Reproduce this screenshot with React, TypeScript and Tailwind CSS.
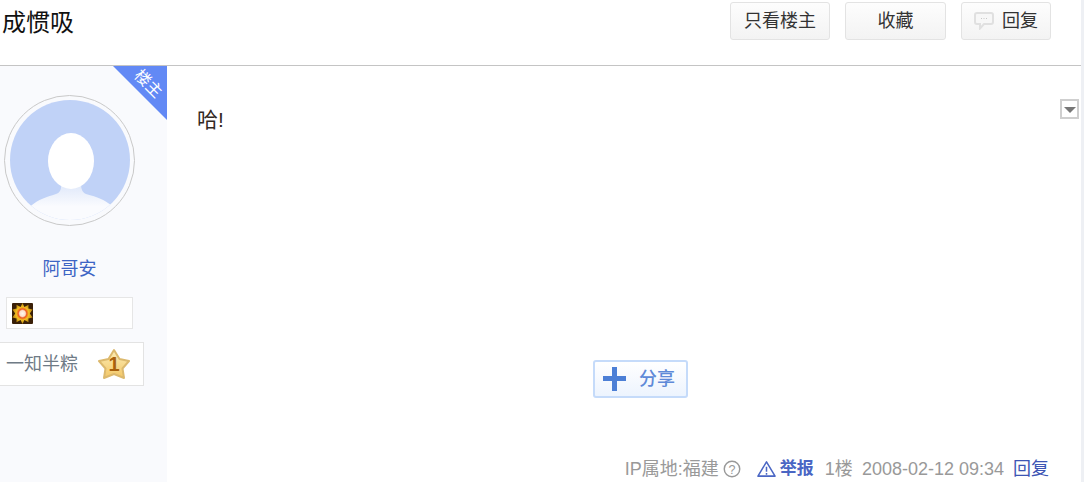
const font = "[font-family:'Liberation_Sans','Noto_Sans_CJK_SC',sans-serif]";

function Avatar() {
  return (
    <div className="ml-[4px] mt-[29px] h-[131px] w-[131px] rounded-full border border-[#c9c9c9] px-[5px] pt-[4px]">
      <svg viewBox="0 0 120 120" className="h-[120px] w-[120px]">
        <defs>
          <clipPath id="round">
            <circle cx="60" cy="60" r="60" />
          </clipPath>
          <linearGradient id="body" x1="0" y1="0" x2="0" y2="1">
            <stop offset="0" stopColor="#dfe8fa" />
            <stop offset="0.55" stopColor="#fafbfe" />
          </linearGradient>
        </defs>
        <g clipPath="url(#round)">
          <rect width="120" height="120" fill="#c0d2f7" />
          <path d="M15 110 L22 105 C28 100 36 97 46 94 Q52 92 51 84 L71 84 Q71 92 76 94 C88 97 94 100 101 105 L108 110 L108 125 L15 125 Z" fill="url(#body)" />
          <ellipse cx="61" cy="61" rx="23" ry="28" fill="#fff" />
        </g>
      </svg>
    </div>
  );
}

function LevelIcon() {
  return (
    <svg viewBox="0 0 21 21" className="h-[21px] w-[21px]">
      <defs>
        <radialGradient id="glow">
          <stop offset="0" stopColor="#fff6ee" />
          <stop offset="0.28" stopColor="#fde0cc" />
          <stop offset="0.42" stopColor="#ee5a22" />
          <stop offset="0.62" stopColor="#f2bf22" />
          <stop offset="1" stopColor="#b9860f" />
        </radialGradient>
      </defs>
      <rect width="21" height="21" rx="1" fill="#3a2008" />
      <path d="M10.5 0 L12.4 4 L16.5 1.8 L16.4 5.6 L20.6 6.4 L17.8 10.5 L20.6 14.6 L16.4 15.4 L16.5 19.2 L12.4 17 L10.5 21 L8.6 17 L4.5 19.2 L4.6 15.4 L0.4 14.6 L3.2 10.5 L0.4 6.4 L4.6 5.6 L4.5 1.8 L8.6 4 Z" fill="url(#glow)" />
    </svg>
  );
}

function StarIcon() {
  return (
    <div className="relative h-[32px] w-[32px]">
      <svg viewBox="0 0 32 32" className="h-[32px] w-[32px]">
        <defs>
          <linearGradient id="star" x1="0" y1="0" x2="0" y2="1">
            <stop offset="0" stopColor="#fcedb8" />
            <stop offset="1" stopColor="#f3c766" />
          </linearGradient>
        </defs>
        <path d="M16 2 L21.5 11 L31 13 L24.5 20.5 L26 30 L16 26 L6 30 L7.5 20.5 L1 13 L10.5 11 Z" fill="url(#star)" stroke="#dcb96e" strokeWidth="2" strokeLinejoin="round" />
      </svg>
      <span className="absolute inset-0 flex items-center justify-center font-['Liberation_Sans'] text-[20px] font-bold text-[#a9610c]">1</span>
    </div>
  );
}

function HeadButton({ children, className }: { children: React.ReactNode; className: string }) {
  return (
    <button className={`flex h-[38px] items-center justify-center rounded-[3px] border border-[#e3e3e3] bg-gradient-to-b from-[#fdfdfd] to-[#f3f3f3] text-[18px] text-[#333] ${className}`}>
      {children}
    </button>
  );
}

export default function App() {
  return (
    <div className="bg-[#eef0f4] pr-[3px]">
      <div className={`flex h-[482px] w-[1081px] flex-col overflow-hidden bg-white ${font}`}>
        <header className="flex h-[66px] shrink-0 items-start justify-between border-b border-[#c4c4c4]">
          <h1 className="ml-[2px] mt-[6px] text-[24px] leading-[34px] font-normal text-[#111]">成惯吸</h1>
          <div className="mr-[30px] mt-[2px] flex gap-[15px]">
            <HeadButton className="w-[100px]">只看楼主</HeadButton>
            <HeadButton className="w-[101px]">收藏</HeadButton>
            <HeadButton className="w-[90px] gap-[8px]">
              <svg viewBox="0 0 20 18" className="h-[18px] w-[20px]">
                <path d="M3 1 H17 A2 2 0 0 1 19 3 V10 A2 2 0 0 1 17 12 H10 L6 16.5 V12 H3 A2 2 0 0 1 1 10 V3 A2 2 0 0 1 3 1 Z" fill="#f7f7f7" stroke="#e0e0e0" strokeWidth="2" />
                <path d="M7 6.5 H8 M9.5 6.5 H10.5 M12 6.5 H13" stroke="#c8c8c8" />
              </svg>
              回复
            </HeadButton>
          </div>
        </header>

        <div className="flex min-h-0 flex-1">
          <aside className="relative flex w-[167px] shrink-0 flex-col bg-[#f9fafd]">
            <div className="absolute right-0 top-0 h-[54px] w-[54px] bg-[#6289f5] [clip-path:polygon(0_0,100%_0,100%_100%)]">
              <span className="absolute left-[17px] top-[9px] w-[36px] rotate-45 text-center text-[16px] leading-[18px] text-white">楼主</span>
            </div>
            <Avatar />
            <a className="mt-[30px] w-[139px] text-center text-[18px] leading-[26px] text-[#3d64c4]">阿哥安</a>
            <div className="ml-[6px] mt-[15px] flex h-[32px] w-[127px] items-center border border-[#e6e6e6] bg-white pl-[5px]">
              <LevelIcon />
            </div>
            <div className="ml-[-1px] mt-[13px] flex h-[44px] w-[145px] items-center border border-[#e3e3e3] bg-white pl-[6px]">
              <span className="text-[18px] leading-[24px] text-[#6f7b86]">一知半粽</span>
              <div className="ml-[20px]">
                <StarIcon />
              </div>
            </div>
          </aside>

          <main className="relative flex min-w-0 flex-1 flex-col">
            <div className="absolute right-[2px] top-[33px] flex h-[20px] w-[19px] items-center justify-center border-2 border-[#cfcfcf] bg-white">
              <span className="mt-[2px] h-0 w-0 border-x-[6px] border-t-[6px] border-x-transparent border-t-[#777]" />
            </div>

            <p className="ml-[30px] mt-[40px] text-[21px] leading-[28px] text-[#33291f]">哈!</p>

            <button className="ml-[426px] mt-[226px] flex h-[38px] w-[95px] items-center rounded-[3px] border-2 border-[#c5dbfa] bg-gradient-to-b from-white to-[#edf4fe] pl-[8px] text-[18px] font-medium text-[#5f8ad8]">
              <svg viewBox="0 0 24 24" className="h-[24px] w-[24px]">
                <path d="M9 0 H14 V9 H23 V14 H14 V24 H9 V14 H0 V9 H9 Z" fill="#4c7fd6" />
              </svg>
              <span className="ml-[12px]">分享</span>
            </button>

            <div className="mr-[32px] mt-[59px] flex items-center justify-end text-[18px] leading-[24px] text-[#999]">
              <span>IP属地:福建</span>
              <svg viewBox="0 0 20 20" className="ml-[4px] h-[18px] w-[18px]">
                <circle cx="10" cy="10" r="8.6" fill="none" stroke="#999" strokeWidth="1.6" />
                <text x="10" y="15" textAnchor="middle" fontSize="14" fill="#999">?</text>
              </svg>
              <svg viewBox="0 0 20 18" className="ml-[16px] h-[18px] w-[19px]">
                <path d="M10 1.5 L19 16.5 H1 Z" fill="none" stroke="#4a66c4" strokeWidth="1.6" strokeLinejoin="round" />
                <path d="M10 6.5 V12 M10 13.2 V15" stroke="#4a66c4" strokeWidth="1.6" />
              </svg>
              <span className="ml-[4px] text-[17px] font-bold text-[#4a66c4]">举报</span>
              <span className="ml-[11px]">1楼</span>
              <span className="ml-[9px]">2008-02-12 09:34</span>
              <a className="ml-[9px] text-[#3d55b4]">回复</a>
            </div>
          </main>
        </div>
      </div>
    </div>
  );
}
